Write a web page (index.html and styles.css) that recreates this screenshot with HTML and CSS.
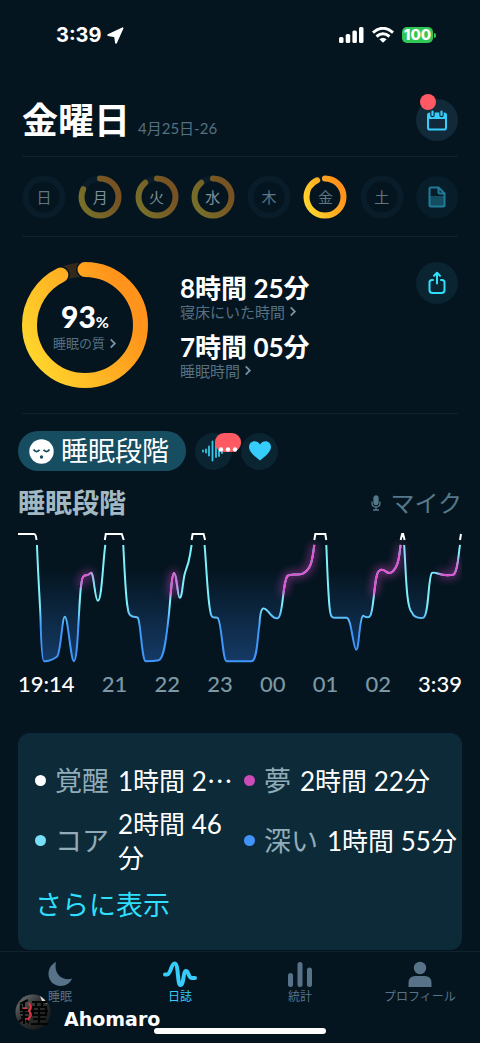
FILE: index.html
```html
<!DOCTYPE html>
<html lang="ja">
<head>
    <meta charset="UTF-8">
    <meta name="viewport" content="width=device-width, initial-scale=1.0">
    <title>睡眠日誌</title>
    <link rel="stylesheet" href="styles.css">
</head>
<body>

<!-- Shared gradient for all rings -->
<svg class="defs" width="0" height="0" aria-hidden="true">
    <defs>
        <linearGradient id="gold" x1="0" y1="0" x2="0.5" y2="1">
            <stop offset="0" stop-color="#ffdc2e"/>
            <stop offset="1" stop-color="#ff931b"/>
        </linearGradient>
    </defs>
</svg>

<div class="app">

    <div class="status-bar">
        <div class="status-time">
            <span>3:39</span>
            <svg width="17" height="17" viewBox="0 0 17 17"><path d="M15.600 1.200 L1.200 8 L8 9.300 L9 15.800Z" fill="#fff" stroke="#fff" stroke-width="1.800" stroke-linejoin="round"/></svg>
        </div>
        <div class="status-icons">
            <svg width="25" height="16" viewBox="0 0 25 16" fill="#fff">
                <rect x="0" y="10" width="4.500" height="6" rx="1.500"/>
                <rect x="6.700" y="7" width="4.500" height="9" rx="1.500"/>
                <rect x="13.400" y="3.500" width="4.500" height="12.500" rx="1.500"/>
                <rect x="20" y="0" width="4.500" height="16" rx="1.500"/>
            </svg>
            <svg width="22" height="16" viewBox="0 0 22 16" fill="none" stroke="#fff" stroke-width="3">
                <path d="M1 5.600 Q11 -3 21 5.600"/>
                <path d="M4.500 9.500 Q11 3.900 17.500 9.500"/>
                <path d="M7.400 12.200 Q11 9.200 14.600 12.200 L11 15.800Z" fill="#fff" stroke="none"/>
            </svg>
            <div class="battery">100</div>
        </div>
    </div>

    <header class="header">
        <h1>金曜日</h1>
        <span class="date">4月25日-26</span>
        <button class="round-btn calendar" aria-label="カレンダー">
            <svg width="22" height="21" viewBox="0 0 22 21">
                <rect x="2" y="3.500" width="18" height="16" rx="1.800" fill="none" stroke="#36cdfb" stroke-width="2"/>
                <path d="M2 3.500 H20 V9 H2Z" fill="#36cdfb"/>
                <path d="M6.500 1.500 V5 M15.500 1.500 V5" stroke="#12293a" stroke-width="4.500" stroke-linecap="round"/>
                <path d="M6.500 1.500 V5 M15.500 1.500 V5" stroke="#36cdfb" stroke-width="2.200" stroke-linecap="round"/>
            </svg>
            <span class="red-dot"></span>
        </button>
    </header>

    <!-- Week -->
    <div class="week">
        <button class="day">
            <svg viewBox="0 0 44 44"><circle class="track" cx="22" cy="22" r="18.500"/></svg>
            <span>日</span>
        </button>
        <button class="day past">
            <svg viewBox="0 0 44 44"><circle class="track" cx="22" cy="22" r="18.500"/><circle class="bar" cx="22" cy="22" r="18.500" pathLength="100" stroke-dasharray="82 100"/></svg>
            <span>月</span>
        </button>
        <button class="day past">
            <svg viewBox="0 0 44 44"><circle class="track" cx="22" cy="22" r="18.500"/><circle class="bar" cx="22" cy="22" r="18.500" pathLength="100" stroke-dasharray="89 100"/></svg>
            <span>火</span>
        </button>
        <button class="day past">
            <svg viewBox="0 0 44 44"><circle class="track" cx="22" cy="22" r="18.500"/><circle class="bar" cx="22" cy="22" r="18.500" pathLength="100" stroke-dasharray="89 100"/></svg>
            <span>水</span>
        </button>
        <button class="day">
            <svg viewBox="0 0 44 44"><circle class="track" cx="22" cy="22" r="18.500"/></svg>
            <span>木</span>
        </button>
        <button class="day">
            <svg viewBox="0 0 44 44"><circle class="track" cx="22" cy="22" r="18.500"/><circle class="bar" cx="22" cy="22" r="18.500" pathLength="100" stroke-dasharray="93 100"/></svg>
            <span>金</span>
        </button>
        <button class="day">
            <svg viewBox="0 0 44 44"><circle class="track" cx="22" cy="22" r="18.500"/></svg>
            <span>土</span>
        </button>
        <button class="round-btn note" aria-label="メモ">
            <svg width="18" height="22" viewBox="0 0 18 22">
                <path d="M1.500 10 H16.500 V19 Q16.500 20.500 15 20.500 H3 Q1.500 20.500 1.500 19Z" fill="#134c63"/>
                <path d="M3 1.500 H10.500 L16.500 7.500 V19 Q16.500 20.500 15 20.500 H3 Q1.500 20.500 1.500 19 V3 Q1.500 1.500 3 1.500Z M10.500 1.500 V6 Q10.500 7.500 12 7.500 H16.500" fill="none" stroke="#217b97" stroke-width="2" stroke-linejoin="round"/>
            </svg>
        </button>
    </div>

    <!-- Summary -->
    <section class="summary">
        <div class="quality">
            <svg viewBox="0 0 126 126">
                <circle class="q-track" cx="63" cy="63" r="55.500"/>
                <circle class="q-edge" cx="63" cy="63" r="55.500" pathLength="100" stroke-dasharray="92.800 100"/>
                <circle class="q-bar" cx="63" cy="63" r="55.500" pathLength="100" stroke-dasharray="92.800 100"/>
            </svg>
            <div class="quality-text">
                <div class="score">93<small>%</small></div>
                <a class="sub" href="#quality">睡眠の質<svg class="chev" viewBox="0 0 8 12"><path d="M1.500 1.500 L6 6 L1.500 10.500"/></svg></a>
            </div>
        </div>
        <div class="times">
            <div class="time">8時間 25分</div>
            <a class="sub" href="#bed">寝床にいた時間<svg class="chev" viewBox="0 0 8 12"><path d="M1.500 1.500 L6 6 L1.500 10.500"/></svg></a>
            <div class="time">7時間 05分</div>
            <a class="sub" href="#asleep">睡眠時間<svg class="chev" viewBox="0 0 8 12"><path d="M1.500 1.500 L6 6 L1.500 10.500"/></svg></a>
        </div>
        <button class="round-btn share" aria-label="共有">
            <svg width="18" height="24" viewBox="0 0 18 24" fill="none" stroke="#2ee0fa" stroke-width="2" stroke-linecap="round" stroke-linejoin="round">
                <path d="M5 9 H4 Q1.500 9 1.500 11.500 V19 Q1.500 22 4.500 22 H13.500 Q16.500 22 16.500 19 V11.500 Q16.500 9 14 9 H13"/>
                <path d="M9 12.500 V2 M6 4.700 L9 1.700 L12 4.700"/>
            </svg>
        </button>
    </section>

    <!-- Chart -->
    <section class="stages">
        <div class="chips">
            <button class="chip active">
                <svg width="25" height="25" viewBox="0 0 25 25">
                    <circle cx="12.500" cy="12.500" r="12.200" fill="#fff"/>
                    <path d="M4.500 10.500 Q7.500 14.500 10.500 10.800 M14.500 10.800 Q17.500 14.500 20.500 10.500" fill="none" stroke="#164d61" stroke-width="1.800"/>
                    <circle cx="12.500" cy="18" r="1.700" fill="#164d61"/>
                </svg>
                <span>睡眠段階</span>
            </button>
            <button class="chip-icon" aria-label="音">
                <svg width="26" height="22" viewBox="0 0 26 22" stroke="#36c5e8" stroke-width="1.800" stroke-linecap="round">
                    <path d="M2 10.500 V11.500 M5 9.500 V12.500 M8 6.500 V15.500 M11.500 1.500 V20.500 M15 5 V17 M18 9 V16 M21 8 V13"/>
                </svg>
                <span class="bubble">
                    <svg width="20" height="5" viewBox="0 0 20 5" fill="#fff"><circle cx="3" cy="2.500" r="2.200"/><circle cx="10" cy="2.500" r="2.200"/><circle cx="17" cy="2.500" r="2.200"/></svg>
                </span>
            </button>
            <button class="chip-icon" aria-label="心拍">
                <svg width="24" height="22" viewBox="0 0 24 22"><path d="M12 20.500 C9 18 1 12.500 1 7 C1 3.500 3.500 1.200 6.500 1.200 C9.200 1.200 11 2.500 12 4.500 C13 2.500 14.800 1.200 17.500 1.200 C20.500 1.200 23 3.500 23 7 C23 12.500 15 18 12 20.500Z" fill="#36cdfb"/></svg>
            </button>
        </div>

        <div class="chart-head">
            <h2>睡眠段階</h2>
            <span class="mic">
                <svg width="10" height="16" viewBox="0 0 10 16" fill="none" stroke="#55798a" stroke-width="1.300">
                    <rect x="3" y="1" width="4" height="8.500" rx="2" fill="#55798a"/>
                    <path d="M1 6.500 V8 Q1 12 5 12 Q9 12 9 8 V6.500 M5 12 V15 M2 15 H8"/>
                </svg>
                マイク
            </span>
        </div>

        <svg class="chart" viewBox="0 0 445 138">
            <defs>
                <linearGradient id="depth" gradientUnits="userSpaceOnUse" x1="0" y1="76" x2="0" y2="100">
                    <stop offset="0" stop-color="#7df1fb"/>
                    <stop offset="1" stop-color="#4097fb"/>
                </linearGradient>
                <linearGradient id="area" gradientUnits="userSpaceOnUse" x1="0" y1="42" x2="0" y2="134">
                    <stop offset="0" stop-color="#153a66" stop-opacity="0"/>
                    <stop offset="1" stop-color="#153a66"/>
                </linearGradient>
                <filter id="soft" x="-20%" y="-50%" width="140%" height="200%"><feGaussianBlur stdDeviation="2"/></filter>
                <filter id="glow" x="-10%" y="-30%" width="120%" height="160%"><feGaussianBlur stdDeviation="4"/></filter>
                <!-- where REM sleep tints the line -->
                <mask id="rem" maskUnits="userSpaceOnUse" x="0" y="0" width="445" height="138">
                    <g fill="#fff" filter="url(#soft)">
                        <rect x="60" y="30" width="14" height="30"/>
                        <rect x="150" y="30" width="10" height="38"/>
                        <rect x="261" y="0" width="42" height="67"/>
                        <rect x="350" y="0" width="35" height="67"/>
                        <rect x="422" y="30" width="20" height="30"/>
                    </g>
                </mask>
                <path id="stages" d="M19 17 C20 45 22 75 22.500 89 C23 110 24 133.500 26 133.500 C31 134 36 131 39 129 C43 126 44 89 47 89 C50 89 53 133.500 56 133.500 C59 133.500 60 105 61 89 C62 70 63 49 66 48 C69 47 70 48 73 45 C76 43 77 73 80 73 C84 73 85 35 87.500 17
                    M105.500 17 C107 45 108 72 110 80 C111 92 118 88 120 90 C123 93 124 133 128 133.500 C132 133.500 136 133.500 141 132.500 C147 131 149 105 151 89 C153 70 154 45 156.500 45 C159 45 160 70 162 70 C165 70 165 50 168 43 C172 33 171 35 174 17
                    M187 17 C189 40 190 72 193 85 C194 92 198 89 200 90 C204 92 205 133 209 133.500 H234 C240 133.500 240 107 242 97 C243 75 247 80 251 84 C254 88 258 92 261 90 C266 86 265 55 270 48 C275 45 280 48 285 46 C295 41 295 30 297 17
                    M309 17 C310 40 311 75 313 85 C314 91 317 90 319 90 H329 C334 88 336 122 339 122 C342 122 342 89 346 88 C350 90 352 90 353 88 C357 82 357 45 362 43 C367 38 370 49 375 44 C381 39 382 30 383.500 17
                    M387 17 C389 45 389 80 395 85 C397 90 401 90.500 406 90 C412 89 411 47 415 45 C419 43 424 50 437 46.500 C441 42 441 30 443 17"/>
            </defs>
            <use href="#stages" fill="url(#area)"/>
            <g class="halo" filter="url(#glow)">
                <g mask="url(#rem)"><use href="#stages" class="line" stroke="#c63fb8"/></g>
            </g>
            <use href="#stages" class="line" stroke="url(#depth)"/>
            <g mask="url(#rem)">
                <use href="#stages" class="line" stroke="#e452d0"/>
            </g>
            <path class="line awake" d="M0 6 H16 Q18 6 18.500 12 M87 12 L88 6 H104 L106 12 M174 12 L175 6 H186 L187.500 12 M297 12 L298 6 H308 L309 12 M383.500 12 L385 6 H386 L387.500 12 M443 12 L444 6"/>
        </svg>

        <div class="axis">
            <span class="edge">19:14</span>
            <span>21</span>
            <span>22</span>
            <span>23</span>
            <span>00</span>
            <span>01</span>
            <span>02</span>
            <span class="edge">3:39</span>
        </div>

        <div class="card">
            <div class="legend">
                <div class="item"><i class="dot awake-dot"></i><span class="name">覚醒</span><span class="value one-line">1時間 2<span class="more">…</span></span></div>
                <div class="item"><i class="dot dream-dot"></i><span class="name">夢</span><span class="value one-line">2時間 22分</span></div>
                <div class="item"><i class="dot core-dot"></i><span class="name">コア</span><span class="value">2時間 46分</span></div>
                <div class="item"><i class="dot deep-dot"></i><span class="name">深い</span><span class="value one-line">1時間 55分</span></div>
            </div>
            <a class="show-more" href="#more">さらに表示</a>
        </div>
    </section>

    <nav class="tabs">
        <a class="tab" href="#sleep">
            <svg width="26" height="26" viewBox="0 0 26 26"><path d="M9 1 C5 3 1.500 7 1.500 13 C1.500 20 7 25 13.500 25 C19 25 23.500 22 25 17.500 C17 20.500 6 14 9 1Z" fill="#587389"/></svg>
            <span>睡眠</span>
        </a>
        <a class="tab active" href="#journal">
            <svg width="34" height="26" viewBox="0 0 34 26"><path d="M2 13.500 H4 C8 13.500 8 2.500 11.500 2.500 C16 2.500 14 24 17.500 24 C21 24 20 10 23 10 C26 10 25 17 29 17 H32" fill="none" stroke="#36cdfb" stroke-width="4" stroke-linecap="round"/></svg>
            <span>日誌</span>
        </a>
        <a class="tab" href="#stats">
            <svg width="26" height="26" viewBox="0 0 26 26" fill="#587389"><rect x="1" y="12" width="5" height="14" rx="2.500"/><rect x="10.500" y="1" width="5" height="25" rx="2.500"/><rect x="20" y="6.500" width="5" height="19.500" rx="2.500"/></svg>
            <span>統計</span>
        </a>
        <a class="tab" href="#profile">
            <svg width="26" height="26" viewBox="0 0 26 26" fill="#587389"><circle cx="13" cy="7" r="6.200"/><path d="M1.500 26 V22 Q1.500 15 8.500 15 H17.500 Q24.500 15 24.500 22 V26Z"/></svg>
            <span>プロフィール</span>
        </a>
        <div class="home-bar"></div>
        <div class="watermark">
            <svg width="38" height="38" viewBox="0 0 38 38">
                <defs>
                    <linearGradient id="metal" x1="0" y1="0" x2="1" y2="1">
                        <stop offset="0" stop-color="#7b8082"/>
                        <stop offset="0.400" stop-color="#343637"/>
                        <stop offset="1" stop-color="#121212"/>
                    </linearGradient>
                </defs>
                <circle cx="19" cy="19" r="17.500" fill="url(#metal)"/>
                <path d="M26 3 Q31 6 33 11 L28 8Z" fill="#ddd"/>
                <path d="M15 10 L17 14 L15 18 L17 22 L14 27 M8 17 L13 15 M9 29 L13 25" stroke="#e2353f" stroke-width="2" fill="none"/>
                <g fill="none" stroke="#050505" stroke-width="2.200">
                    <path d="M6 11 L14 7 M7 12 V17 H14 M10 9 V14 M6 20 H15 M7 24 H14 M10 18 V31 M5 29 L9 26 M12 27 L15 30"/>
                    <path d="M18 9 H33 M22 9 V14 M28 9 V14 M19 14 H32 V22 H19Z M25 14 V30 M17 18 H34 M19 26 H32 M17 31 H34"/>
                </g>
            </svg>
            <span>Ahomaro</span>
        </div>
    </nav>
</div>

</body>
</html>
```
FILE: styles.css
```css
* {
    box-sizing: border-box;
}

body {
    margin: 0;
    background-color: #04151f;
    color: #fff;
    font-family: "Lato", "Noto Sans CJK JP", sans-serif;
}

button {
    border: none;
    padding: 0;
    margin: 0;
    background: none;
    color: inherit;
    font-family: inherit;
    cursor: pointer;
}

a {
    color: inherit;
    text-decoration: none;
}

svg {
    display: block;
    flex-shrink: 0;
}

.defs {
    position: absolute;
}

.app {
    display: flex;
    flex-direction: column;
    min-height: 100vh;
}

/* Status bar */
.status-bar {
    display: flex;
    justify-content: space-between;
    align-items: center;
    height: 70px;
    padding: 0 47px 0 56px;
}

.status-time {
    display: flex;
    align-items: center;
    gap: 5px;
    font: 700 20px "Inter", sans-serif;
}

.status-icons {
    display: flex;
    align-items: center;
    gap: 8px;
}

.battery {
    position: relative;
    width: 31px;
    border-radius: 5px;
    background-color: #30c755;
    font: 800 15px/16px "Inter", sans-serif;
    text-align: center;
}

.battery::after {
    content: "";
    position: absolute;
    right: -3px;
    top: 6px;
    width: 2px;
    height: 5px;
    border-radius: 0 2px 2px 0;
    background-color: #30c755;
}

/* Header */
.header {
    display: flex;
    align-items: center;
    gap: 8px;
    margin: 0 22px;
    padding-top: 14px;
    height: 87px;
    border-bottom: 1px solid #0f232e;
}

h1 {
    margin: 0;
    font-size: 36px;
    line-height: 48px;
    font-weight: 700;
}

.date {
    padding-top: 16px;
    color: #547082;
    font-size: 15px;
    line-height: 20px;
}

.round-btn {
    display: flex;
    align-items: center;
    justify-content: center;
    flex-shrink: 0;
    width: 42px;
    height: 42px;
    border-radius: 50%;
    background-color: #0b2431;
}

.calendar {
    position: relative;
    margin-left: auto;
    background-color: #12293a;
}

.red-dot {
    position: absolute;
    left: 4px;
    top: -5px;
    width: 16px;
    height: 16px;
    border-radius: 50%;
    background-color: #ff5963;
}

/* Week */
.week {
    display: flex;
    justify-content: space-between;
    align-items: center;
    height: 80px;
    margin: 0 22px;
    border-bottom: 1px solid #0f232e;
}

.day {
    display: grid;
    place-items: center;
    width: 44px;
    height: 44px;
    color: #5f7684;
    font-size: 15px;
    line-height: 20px;
}

.day svg, .day span {
    grid-area: 1 / 1;
}

.day svg {
    width: 44px;
    height: 44px;
}

.day circle {
    fill: none;
    stroke-width: 6;
}

.track {
    stroke: #081d29;
}

.bar {
    stroke: url(#gold);
    stroke-linecap: round;
    transform: rotate(-90deg);
    transform-origin: center;
}

.past .bar {
    opacity: 0.45;
}

.past span {
    color: #7d929c;
}

.note {
    background-color: #071e2a;
}

/* Summary */
.summary {
    display: flex;
    align-items: center;
    gap: 32px;
    height: 177px;
    margin: 0 22px;
    border-bottom: 1px solid #0f232e;
}

.quality {
    display: grid;
    place-items: center;
    width: 126px;
    height: 126px;
}

.quality > * {
    grid-area: 1 / 1;
}

.quality circle {
    fill: none;
    transform: rotate(-90deg);
    transform-origin: center;
}

.q-track {
    stroke: #33291b;
    stroke-width: 14;
}

.q-edge {
    stroke: #04151f;
    stroke-width: 18;
    stroke-linecap: round;
}

.q-bar {
    stroke: url(#gold);
    stroke-width: 15;
    stroke-linecap: round;
}

.quality-text {
    display: flex;
    flex-direction: column;
    align-items: center;
    padding-top: 4px;
}

.score {
    font-size: 30px;
    line-height: 26px;
    font-weight: 900;
}

.score small {
    font-size: 16px;
    font-weight: 700;
}

.sub {
    display: flex;
    align-items: center;
    gap: 4px;
    color: #547082;
    font-size: 15px;
    line-height: 16px;
}

.quality .sub {
    font-size: 13px;
}

.chev {
    width: 8px;
    height: 11px;
    fill: none;
    stroke: #7590a0;
    stroke-width: 2;
}

.time {
    font-size: 26px;
    line-height: 32px;
    font-weight: 700;
}

.sub + .time {
    margin-top: 11px;
}

.times {
    flex: 1;
}

.share {
    align-self: flex-start;
    margin-top: 25px;
}

/* Stages */
.stages {
    display: flex;
    flex-direction: column;
    padding: 17px 18px 0;
}

.chips {
    display: flex;
    align-items: center;
    gap: 9px;
}

.chip {
    display: flex;
    align-items: center;
    gap: 7px;
    height: 40px;
    padding: 0 17px 0 11px;
    border-radius: 20px;
    background-color: #164d61;
    font-size: 27px;
    line-height: 40px;
}

.chip-icon {
    position: relative;
    display: flex;
    align-items: center;
    justify-content: center;
    width: 37px;
    height: 37px;
    border-radius: 50%;
    background-color: #0b2431;
}

.bubble {
    position: absolute;
    left: 20px;
    top: 0;
    display: flex;
    align-items: flex-end;
    justify-content: center;
    width: 26px;
    height: 19px;
    border-radius: 9px;
    background-color: #ff5963;
}

.chart-head {
    display: flex;
    justify-content: space-between;
    align-items: center;
    height: 57px;
    padding-top: 6px;
}

h2 {
    margin: 0;
    color: #a2b9c4;
    font-size: 27px;
    line-height: 40px;
    font-weight: 700;
}

.mic {
    display: flex;
    align-items: center;
    gap: 9px;
    color: #55798a;
    font-size: 24px;
    line-height: 36px;
}

.chart {
    width: 100%;
    height: auto;
}

.line {
    fill: none;
    stroke-width: 2;
}

.halo .line {
    stroke-width: 6;
}

.halo {
    opacity: 0.6;
}

.awake {
    stroke: #fff;
}

.axis {
    display: flex;
    justify-content: space-between;
    color: #7c98a4;
    font-size: 22px;
    line-height: 36px;
    font-weight: 500;
}

.edge {
    color: #fff;
}

.card {
    margin-top: 31px;
    padding: 26px 4px 25px 17px;
    border-radius: 12px;
    background-color: #0c2a38;
    font-size: 27px;
    line-height: 34px;
}

.legend {
    display: grid;
    grid-template-columns: 209fr 214fr;
    row-gap: 4px;
}

.item {
    display: flex;
    align-items: center;
    gap: 9px;
    min-width: 0;
}

.item:nth-child(-n+2) {
    min-height: 44px;
}

.dot {
    flex-shrink: 0;
    width: 11px;
    height: 11px;
    border-radius: 50%;
}

.awake-dot { background-color: #fff; }
.dream-dot { background-color: #cb4bb8; }
.core-dot { background-color: #79dff9; }
.deep-dot { background-color: #4193f9; }

.name {
    flex-shrink: 0;
    color: #91acb8;
}

.value {
    font-size: 26px;
}

.one-line {
    white-space: nowrap;
}

.more {
    font-family: "Noto Sans CJK JP", sans-serif;
}

.show-more {
    display: inline-block;
    margin-top: 10px;
    color: #2fdffc;
    line-height: 40px;
}

/* Bottom tabs */
.tabs {
    position: relative;
    display: grid;
    grid-template-columns: repeat(4, 1fr);
    align-content: start;
    flex: 1;
    min-height: 90px;
    margin-top: 1px;
    padding-top: 9px;
    border-top: 1px solid #0f232e;
    color: #587389;
}

.tab {
    display: flex;
    flex-direction: column;
    align-items: center;
    gap: 2px;
    font-size: 12px;
    line-height: 16px;
}

.tab.active {
    color: #36cdfb;
}

.home-bar {
    position: absolute;
    left: 50%;
    bottom: 9px;
    width: 172px;
    height: 6px;
    margin-left: -86px;
    border-radius: 3px;
    background-color: #fff;
}

.watermark {
    position: absolute;
    left: 14px;
    bottom: 12px;
    display: flex;
    align-items: center;
    gap: 12px;
    color: #fff;
    font: 700 19px "DejaVu Sans", sans-serif;
}

.watermark span {
    padding-top: 14px;
}
```
